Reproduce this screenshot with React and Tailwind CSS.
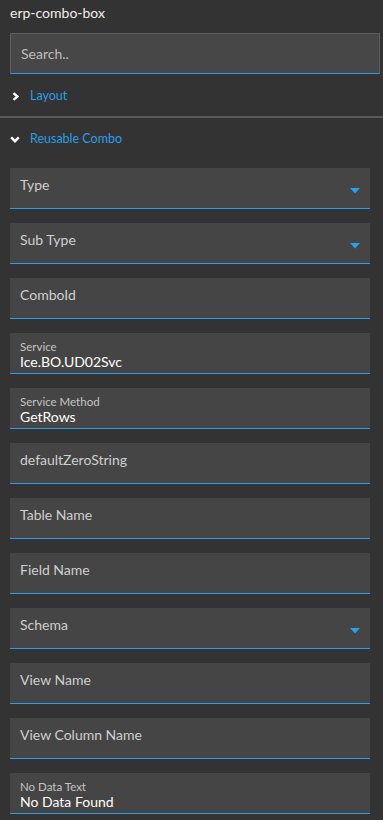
import React from "react";

const font = { fontFamily: "Lato, 'Open Sans', sans-serif" };

function Caret() {
  return (
    <svg width="10" height="6" viewBox="0 0 10 6" className="absolute right-[10px] top-[20px]">
      <path d="M0 0 H10 L5 5.5 Z" fill="#2a9fe8" />
    </svg>
  );
}

function Field({ label, value, dropdown }) {
  return (
    <div className="relative h-[41px] w-[360px] bg-[#454545] border-b border-[#2a9fe8]">
      {value ? (
        <div className="flex flex-col pl-[10px] pt-[7px]">
          <span className="text-[11.5px] leading-[13px] text-[#c4c4c4]">{label}</span>
          <span className="text-[14px] leading-[18px] text-white">{value}</span>
        </div>
      ) : (
        <div className="pl-[10px] pt-[8px] text-[14px] leading-[18px] text-[#cfcfcf]">{label}</div>
      )}
      {dropdown && <Caret />}
    </div>
  );
}

export default function App() {
  const fields = [
    { label: "Type", dropdown: true },
    { label: "Sub Type", dropdown: true },
    { label: "ComboId" },
    { label: "Service", value: "Ice.BO.UD02Svc" },
    { label: "Service Method", value: "GetRows" },
    { label: "defaultZeroString" },
    { label: "Table Name" },
    { label: "Field Name" },
    { label: "Schema", dropdown: true },
    { label: "View Name" },
    { label: "View Column Name" },
    { label: "No Data Text", value: "No Data Found" },
  ];
  return (
    <div className="w-[383px] h-[820px] bg-[#333333] overflow-hidden" style={font}>
      <div className="px-[10px] pt-[4px] h-[33px] text-[14px] leading-[18px] text-[#f0f0f0]">erp-combo-box</div>
      <div className="mx-[10px] h-[41px] w-[370px] bg-[#474747] border border-[#5e5e5e] border-b-[#2a9fe8] flex items-center pl-[10px] text-[14px] text-[#bdbdbd]">
        Search..
      </div>
      <div className="h-[42px] flex items-center pl-[12px] gap-[11px] text-[12.5px] text-[#2a9fe8] pt-[2px]">
        <svg width="7" height="9" viewBox="0 0 7 9">
          <path d="M1.5 1.2 L5.4 4.5 L1.5 7.8" stroke="#ffffff" strokeWidth="2.4" fill="none" />
        </svg>
        <span>Layout</span>
      </div>
      <div className="h-[2px] bg-[#5a5a5a]" />
      <div className="h-[40px] flex items-center pl-[10px] gap-[10px] text-[12.5px] text-[#2a9fe8] pt-[2px]">
        <svg width="10" height="7" viewBox="0 0 10 7">
          <path d="M1.2 1.4 L5 5.2 L8.8 1.4" stroke="#ffffff" strokeWidth="2.4" fill="none" />
        </svg>
        <span>Reusable Combo</span>
      </div>
      <div className="flex flex-col gap-[14px] pl-[10px] pt-[10px]">
        {fields.map((f) => (
          <Field key={f.label} {...f} />
        ))}
      </div>
    </div>
  );
}
